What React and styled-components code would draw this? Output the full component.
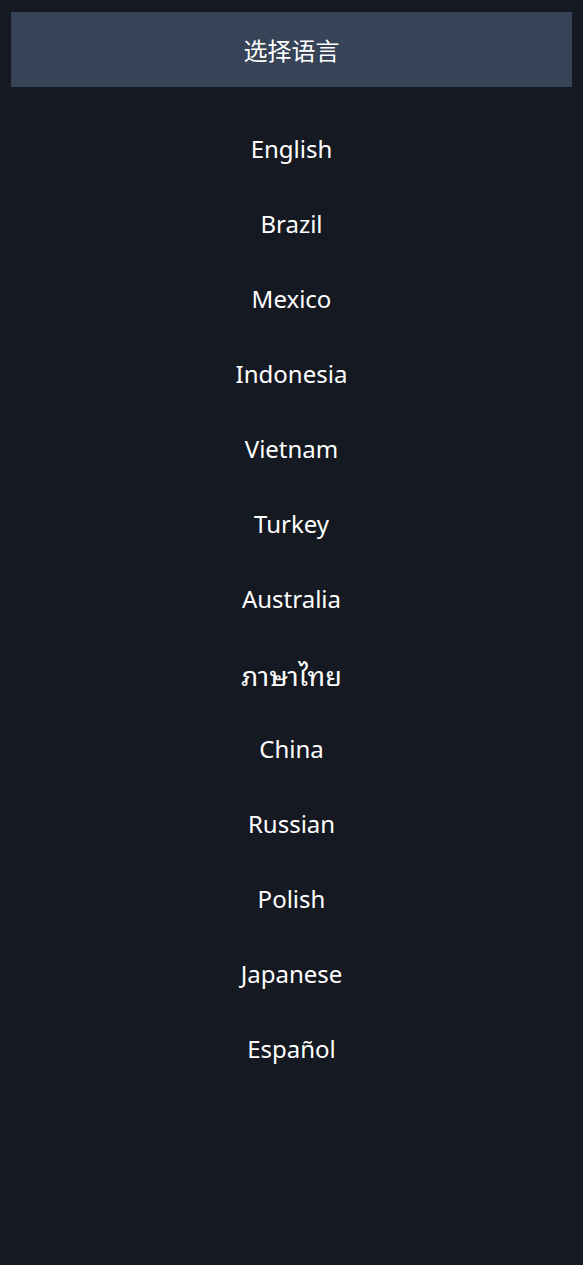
import styled, { createGlobalStyle } from 'styled-components';

const GlobalStyle = createGlobalStyle`
  html, body {
    margin: 0;
    padding: 0;
    background: #151922;
  }
  body {
    font-family: 'Noto Sans', 'Noto Sans CJK SC', sans-serif;
    color: #ffffff;
  }
`;

const Page = styled.div`
  min-height: 1265px;
  padding: 12px 11px;
  box-sizing: border-box;
  background: #151922;
`;

const Header = styled.div`
  height: 75px;
  background: #374357;
  display: flex;
  align-items: center;
  justify-content: center;
  font-size: 24px;
  font-family: 'Noto Sans CJK SC', sans-serif;
  color: #fff;
`;

const List = styled.ul`
  list-style: none;
  margin: 24px 0 0;
  padding: 0;
  display: flex;
  flex-direction: column;
`;

const Item = styled.li`
  height: 75px;
  display: flex;
  align-items: center;
  justify-content: center;
  font-size: ${(props) => (props.$thai ? '27px' : '24px')};
  font-family: ${(props) =>
    props.$thai
      ? "'Noto Sans Thai Looped', 'Noto Sans Thai', 'Noto Sans', sans-serif"
      : "'Noto Sans', sans-serif"};
  color: #fff;
  cursor: pointer;
`;

const languages = [
  'English',
  'Brazil',
  'Mexico',
  'Indonesia',
  'Vietnam',
  'Turkey',
  'Australia',
  'ภาษาไทย',
  'China',
  'Russian',
  'Polish',
  'Japanese',
  'Español',
];

export default function App() {
  return (
    <>
      <GlobalStyle />
      <Page>
        <Header>选择语言</Header>
        <List>
          {languages.map((lang) => (
            <Item key={lang} $thai={lang === 'ภาษาไทย'}>
              {lang}
            </Item>
          ))}
        </List>
      </Page>
    </>
  );
}
